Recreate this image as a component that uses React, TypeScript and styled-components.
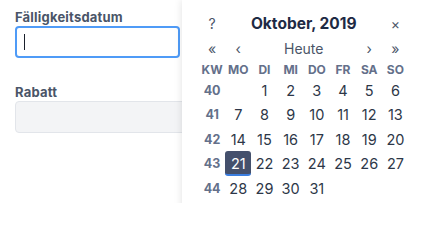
import React from 'react';
import styled, { createGlobalStyle } from 'styled-components';

const GlobalStyle = createGlobalStyle`
  html, body {
    margin: 0;
    padding: 0;
    background: #ffffff;
    overflow: hidden;
  }
  body {
    font-family: Inter, 'Noto Sans', 'Liberation Sans', sans-serif;
  }
`;

const Page = styled.div`
  position: relative;
  width: 424px;
  height: 203px;
  overflow: hidden;
`;

const Form = styled.div`
  display: flex;
  flex-direction: column;
  gap: 26px;
  padding: 9px 0 0 15px;
`;

const Field = styled.div`
  display: flex;
  flex-direction: column;
  gap: 1px;
`;

const Label = styled.label`
  font-size: 13px;
  line-height: 16px;
  font-weight: 700;
  letter-spacing: 0.2px;
  color: #4a5568;
`;

const Input = styled.div<{ $focused?: boolean; $width: number }>`
  box-sizing: border-box;
  width: ${(p) => p.$width}px;
  height: 32px;
  border-radius: 4px;
  border: ${(p) => (p.$focused ? '2px solid #4f9bf7' : '1px solid #e2e5ea')};
  background: ${(p) => (p.$focused ? '#ffffff' : '#f3f4f6')};
  display: flex;
  align-items: center;
  padding-left: 7px;
`;

const Caret = styled.span`
  width: 1px;
  height: 16px;
  background: #1a202c;
`;

/* dropdown calendar lies over the form */
const Popup = styled.div`
  position: absolute;
  left: 182px;
  top: 0;
  width: 270px;
  height: 215px;
  background: #ffffff;
  box-shadow: 0 0 8px rgba(0, 0, 0, 0.12);
  padding: 10px 0 0 17px;
  box-sizing: border-box;
`;

const Grid = styled.div`
  display: grid;
  grid-template-columns: repeat(8, 26.2px);
`;

const Cell = styled.div<{ $h: number; $span?: number }>`
  height: ${(p) => p.$h}px;
  grid-column: span ${(p) => p.$span || 1};
  display: flex;
  align-items: center;
  justify-content: center;
`;

const Title = styled(Cell)`
  font-size: 15.5px;
  font-weight: 700;
  color: #1e2a44;
`;

const Nav = styled(Cell)`
  font-size: 14px;
  color: #4a5568;
`;

const Head = styled(Cell)`
  font-size: 12px;
  font-weight: 700;
  color: #64708a;
`;

const Week = styled(Cell)`
  font-size: 12.5px;
  font-weight: 700;
  color: #64708a;
`;

const Day = styled(Cell)<{ $selected?: boolean }>`
  font-size: 14.5px;
  color: ${(p) => (p.$selected ? '#ffffff' : '#2d3748')};
  span {
    display: flex;
    align-items: center;
    justify-content: center;
    box-sizing: border-box;
    width: 26px;
    height: 25px;
    border-radius: 3px;
    background: ${(p) => (p.$selected ? '#44506c' : 'transparent')};
    border-bottom: ${(p) => (p.$selected ? '2px solid #3b7ee0' : 'none')};
    padding-top: ${(p) => (p.$selected ? '2px' : '0')};
  }
`;

const heads = ['KW', 'MO', 'DI', 'MI', 'DO', 'FR', 'SA', 'SO'];

const weeks: { kw: number; days: (number | null)[] }[] = [
  { kw: 40, days: [null, 1, 2, 3, 4, 5, 6] },
  { kw: 41, days: [7, 8, 9, 10, 11, 12, 13] },
  { kw: 42, days: [14, 15, 16, 17, 18, 19, 20] },
  { kw: 43, days: [21, 22, 23, 24, 25, 26, 27] },
  { kw: 44, days: [28, 29, 30, 31, null, null, null] },
];

export default function App() {
  return (
    <Page>
      <GlobalStyle />
      <Form>
        <Field>
          <Label>Fälligkeitsdatum</Label>
          <Input $focused $width={165}>
            <Caret />
          </Input>
        </Field>
        <Field>
          <Label>Rabatt</Label>
          <Input $width={200} />
        </Field>
      </Form>
      <Popup>
        <Grid>
          <Nav $h={26}>?</Nav>
          <Title $h={26} $span={6}>Oktober, 2019</Title>
          <Nav $h={26}>×</Nav>

          <Nav $h={24}>«</Nav>
          <Nav $h={24}>‹</Nav>
          <Nav $h={24} $span={4}>Heute</Nav>
          <Nav $h={24}>›</Nav>
          <Nav $h={24}>»</Nav>

          {heads.map((h) => (
            <Head key={h} $h={18}>
              {h}
            </Head>
          ))}

          {weeks.map((w) => (
            <React.Fragment key={w.kw}>
              <Week $h={24.5}>{w.kw}</Week>
              {w.days.map((d, i) => (
                <Day key={i} $h={24.5} $selected={d === 21}>
                  <span>{d ?? ''}</span>
                </Day>
              ))}
            </React.Fragment>
          ))}
        </Grid>
      </Popup>
    </Page>
  );
}
